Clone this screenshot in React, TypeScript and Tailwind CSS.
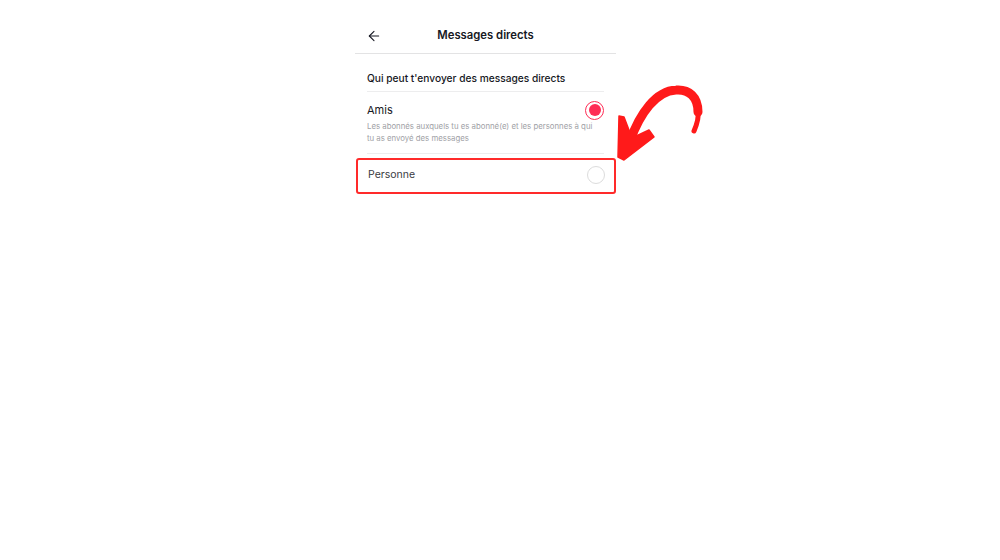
import { ArrowLeft } from "lucide-react";

function Radio({ checked }: { checked: boolean }) {
  if (checked) {
    return (
      <span className="flex h-[19px] w-[19px] items-center justify-center rounded-full border-[1.5px] border-[#fe2c55] bg-white">
        <span className="h-[12px] w-[12px] rounded-full bg-[#fe2c55]" />
      </span>
    );
  }
  return <span className="h-[18px] w-[18px] rounded-full border border-[#dcdcdc] bg-white" />;
}

function RedArrow() {
  return (
    <svg
      className="absolute left-[610px] top-[85px]"
      width="95"
      height="80"
      viewBox="0 0 95 80"
    >
      <path
        d="M84 46 C87 39 89 32 88 26"
        fill="none"
        stroke="#ff1a1a"
        strokeWidth="5"
        strokeLinecap="round"
      />
      <path
        d="M88 27 C88 12 79 4 66 5 C46 6 30 28 20 56"
        fill="none"
        stroke="#ff1a1a"
        strokeWidth="9"
        strokeLinecap="round"
      />
      <polygon
        points="9,31 14,32 22,53 39,45 44,52 14,75 8,72"
        fill="#ff1a1a"
        stroke="#ff1a1a"
        strokeWidth="1.5"
        strokeLinejoin="round"
      />
    </svg>
  );
}

export default function App() {
  return (
    <div
      className="relative h-[560px] w-[1000px] overflow-hidden bg-white text-[#161823]"
      style={{ fontFamily: "Inter, 'Noto Sans', sans-serif" }}
    >
      <div className="ml-[355px] w-[261px]">
        <div className="border-b border-[#e3e3e4] pt-[18px]">
          <div className="relative flex h-[35px] items-center justify-center">
            <ArrowLeft className="absolute left-[11px] h-[16px] w-[16px]" strokeWidth={1.6} />
            <span className="text-[11.3px] font-semibold">Messages directs</span>
          </div>
        </div>

        <div className="px-[12px]">
          <div className="border-b border-[#ededee] pb-[6px] pt-[17px] text-[10.2px] font-medium leading-[14px]">
            Qui peut t'envoyer des messages directs
          </div>
          <div className="border-b border-[#ededee] pb-[9px] pt-[9px]">
            <div className="flex h-[18px] items-center justify-between">
              <span className="text-[11px] leading-[14px]">Amis</span>
              <Radio checked />
            </div>
            <p className="mt-[1px] pr-[4px] text-[7.8px] leading-[12px] text-[#a0a1a6]">
              Les abonnés auxquels tu es abonné(e) et les personnes à qui tu as envoyé des messages
            </p>
          </div>
        </div>

        <div className="ml-[1px] mt-[4px] flex h-[36px] w-[260px] items-center justify-between rounded-[3px] border-2 border-[#ff2a2a] pb-[3px] pl-[10px] pr-[9px]">
          <span className="text-[10.5px] leading-[14px] text-[#3a3b42]">Personne</span>
          <Radio checked={false} />
        </div>
      </div>
      <RedArrow />
    </div>
  );
}
